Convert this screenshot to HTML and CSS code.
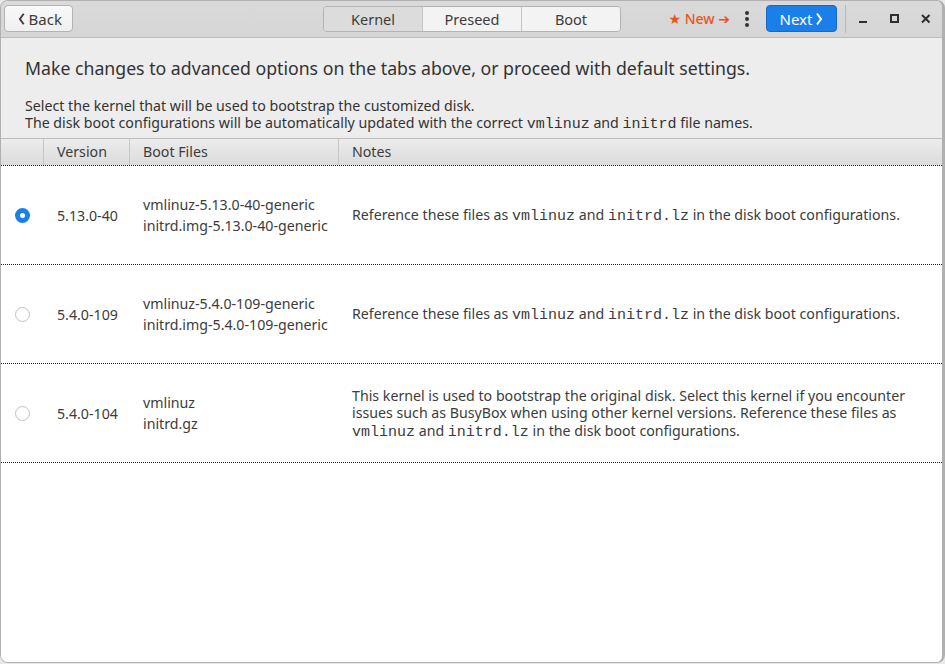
FILE: index.html
```html
<!DOCTYPE html>
<html>
<head>
<meta charset="utf-8">
<link rel="stylesheet" href="styles.css">
</head>
<body>
<div class="window">
  <header class="headerbar">
    <button class="btn back"><svg class="chev" width="8" height="14" viewBox="0 0 8 14"><path d="M6 1.5 L2 7 L6 12.5" fill="none" stroke="#3c3c3c" stroke-width="2"/></svg>Back</button>
    <div class="tabs">
      <div class="tab active">Kernel</div>
      <div class="tab">Preseed</div>
      <div class="tab">Boot</div>
    </div>
    <div class="spacer"></div>
    <div class="new">★ New ➔</div>
    <div class="dots"><span></span><span></span><span></span></div>
    <button class="btn next">Next<svg class="chev" width="8" height="14" viewBox="0 0 8 14"><path d="M2 1.5 L6 7 L2 12.5" fill="none" stroke="#ffffff" stroke-width="2"/></svg></button>
    <div class="sep"></div>
    <div class="winctl">
      <svg width="12" height="12" viewBox="0 0 12 12"><rect x="1" y="8" width="8" height="2" fill="#2e2e2e"/></svg>
      <svg width="12" height="12" viewBox="0 0 12 12"><rect x="2" y="2" width="7" height="7" fill="none" stroke="#2e2e2e" stroke-width="2"/></svg>
      <svg width="12" height="12" viewBox="0 0 12 12"><path d="M2 2 L9.5 9.5 M9.5 2 L2 9.5" stroke="#2e2e2e" stroke-width="2"/></svg>
    </div>
  </header>
  <main class="content">
    <h1 class="title">Make changes to advanced options on the tabs above, or proceed with default settings.</h1>
    <div class="desc">
      <p class="line">Select the kernel that will be used to bootstrap the customized disk.</p>
      <p class="line">The disk boot configurations will be automatically updated with the correct <code>vmlinuz</code> and <code>initrd</code> file names.</p>
    </div>
    <div class="table">
      <div class="thead">
        <div class="th"></div>
        <div class="th">Version</div>
        <div class="th">Boot Files</div>
        <div class="th">Notes</div>
      </div>
      <div class="row">
        <div class="cell"><span class="radio on"></span></div>
        <div class="cell">5.13.0-40</div>
        <div class="cell files"><div>vmlinuz-5.13.0-40-generic<br>initrd.img-5.13.0-40-generic</div></div>
        <div class="cell notes"><div>Reference these files as <code>vmlinuz</code> and <code>initrd.lz</code> in the disk boot configurations.</div></div>
      </div>
      <div class="row">
        <div class="cell"><span class="radio"></span></div>
        <div class="cell">5.4.0-109</div>
        <div class="cell files"><div>vmlinuz-5.4.0-109-generic<br>initrd.img-5.4.0-109-generic</div></div>
        <div class="cell notes"><div>Reference these files as <code>vmlinuz</code> and <code>initrd.lz</code> in the disk boot configurations.</div></div>
      </div>
      <div class="row">
        <div class="cell"><span class="radio"></span></div>
        <div class="cell">5.4.0-104</div>
        <div class="cell files"><div>vmlinuz<br>initrd.gz</div></div>
        <div class="cell notes"><div>This kernel is used to bootstrap the original disk. Select this kernel if you encounter issues such as BusyBox when using other kernel versions. Reference these files as <code>vmlinuz</code> and <code>initrd.lz</code> in the disk boot configurations.</div></div>
      </div>
      <div class="fill"></div>
    </div>
  </main>
</div>
</body>
</html>
```
FILE: styles.css
```css
* { box-sizing: border-box; }
html, body { margin: 0; padding: 0; }
body {
  width: 945px; height: 664px;
  background: #e9e9e9;
  font-family: "Noto Sans", "DejaVu Sans", sans-serif;
  color: #3c3c3c;
  overflow: hidden;
}
.window {
  height: 663px;
  display: flex; flex-direction: column;
  border: 1px solid #b0b0b0;
  border-right-width: 3px;
  border-radius: 8px;
  overflow: hidden;
  background: #ededed;
}
.headerbar {
  height: 37px; flex: none;
  display: flex; align-items: center;
  padding: 0 3px 1px 3px;
  background: linear-gradient(#dadada, #d5d5d5);
  border-bottom: 1px solid #bcbcbc;
}
.spacer { flex: 1; }
.btn {
  font: inherit; font-size: 15px;
  height: 27px;
  border-radius: 4px;
  display: flex; align-items: center; gap: 3px;
  padding: 0 10px;
}
.back {
  width: 69px;
  background: linear-gradient(#f8f8f8, #f0f0f0);
  border: 1px solid #b3b3b3;
  color: #3c3c3c;
  padding-left: 13px;
}
.tabs {
  display: flex;
  border: 1px solid #b3b3b3;
  border-radius: 4px;
  overflow: hidden;
  height: 26px;
  margin-left: 250px;
}
.tab {
  width: 99px;
  display: flex; align-items: center; justify-content: center;
  font-size: 14.5px;
  background: #f3f3f3;
  border-left: 1px solid #c4c4c4;
}
.tab:first-child { border-left: none; width: 98px; }
.tab.active { background: #dcdcdc; }
.new {
  color: #e95420;
  font-size: 14px;
  font-weight: 500;
  margin-right: 15px;
}
.dots {
  width: 6px; display: flex; flex-direction: column; gap: 2px;
  margin-right: 15px;
}
.dots span { width: 4px; height: 4px; border-radius: 50%; background: #333; }
.next {
  width: 71px;
  background: #1a7fe9;
  border: 1px solid #1669c6;
  color: #fff;
  justify-content: center;
  padding: 0;
}
.sep { width: 1px; height: 28px; background: #b8b8b8; margin-left: 8px; margin-right: 12px; }
.winctl { display: flex; gap: 19px; align-items: center; margin-right: 7px; }

.content { flex: 1; display: flex; flex-direction: column; min-height: 0; }
.title {
  margin: 0; padding: 18px 0 0 24px;
  font-size: 17.7px; font-weight: 400; line-height: 24px;
  color: #333;
}
.desc {
  padding: 17px 0 0 24px;
  font-size: 14.2px;
  color: #333;
}
.desc .line { margin: 0; height: 17px; line-height: 17px; white-space: nowrap; }
code { font-family: "Liberation Mono", monospace; font-size: 15px; line-height: 1; }
.table {
  flex: 1;
  margin-top: 7px;
  display: flex; flex-direction: column;
  background: #fff;
  border-top: 1px solid #bcbcbc;
}
.thead {
  display: grid; grid-template-columns: 42px 86px 209px 1fr;
  height: 27px;
  background: linear-gradient(#ececec, #dcdcdc);
  border-bottom: 1px dotted #222;
}
.th {
  font-size: 14.2px; display: flex; align-items: center; padding-left: 13px;
  padding-bottom: 1px;
  border-left: 1px solid #c6c6c6;
}
.th:first-child { border-left: none; }
.row {
  display: grid; grid-template-columns: 42px 86px 209px 1fr;
  height: 99px;
  border-bottom: 1px dotted #222;
  font-size: 14.2px;
}
.cell { display: flex; align-items: center; padding-left: 14px; }
.files { line-height: 21px; }
.notes { line-height: 17.5px; padding-right: 28px; }
.radio {
  width: 15px; height: 15px; border-radius: 50%;
  border: 1px solid #c2c2c2; background: #fff;
}
.radio.on {
  border: 5px solid #1a7fe9;
}
.fill { flex: 1; }
```
